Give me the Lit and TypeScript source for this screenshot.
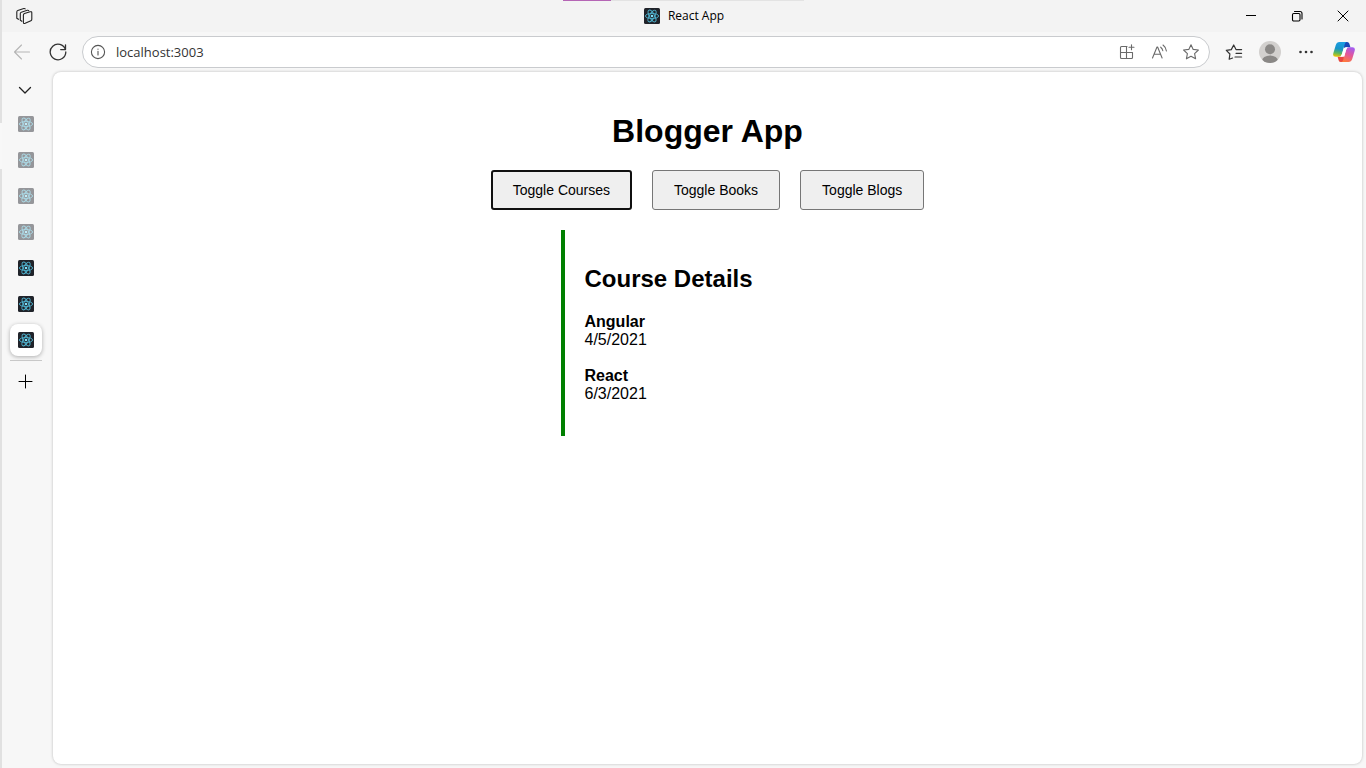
import { LitElement, html, svg, css, nothing } from "lit";
import { customElement, property, state } from "lit/decorators.js";
import { classMap } from "lit/directives/class-map.js";

const stroked = (size: number, body: unknown) => html`
  <svg width=${size} height=${size} viewBox="0 0 ${size} ${size}" fill="none" stroke="currentColor"
    stroke-width="1.1" stroke-linecap="round" stroke-linejoin="round" aria-hidden="true">${body}</svg>`;

const icons = {
  workspaces: stroked(18, svg`
    <path d="M8.400 8.100q0-1.100 1.100-1.500l5.600-1.800q1.700-.5 1.700 1v6.500q0 1-.9 1.400l-5.700 2.600q-1.800.7-1.800-1V8.100Z"/>
    <path d="M6.900 14.300 5.300 13.300V6.600q0-1.100 1-1.400l6-1.900q.9-.3 1.400.300"/>
    <path d="M3.500 12.300 1.800 11.200V4.900q0-1.100 1-1.400l6-1.900q.9-.3 1.400.300"/>`),
  back: stroked(18, svg`<path d="M16.500 9H1.500M8.500 2 1.500 9l7 7"/>`),
  refresh: stroked(18, svg`<path d="M16.400 6.500A7.800 7.800 0 1 0 16.800 9M16.500 1.800v4.800h-4.800" stroke-width="1.300"/>`),
  info: stroked(16, svg`<circle cx="8" cy="8" r="6.600"/><path d="M8 7.300v3.700M8 5v.200"/>`),
  apps: stroked(16, svg`<path d="M8 2.500H2.500q-1 0-1 1V13.500q0 1 1 1h10q1 0 1-1V8.500H1.500M7.500 2.500v12M12.500.800v5M10 3.300h5"/>`),
  read: stroked(18, svg`<path d="M2.500 15 7 4h.6l4.500 11M4 11.200h6.600M10.700 4.200q1.800 1.400 2.100 3.600M13 2q3 2.200 3.400 6"/>`),
  star: stroked(18, svg`<path d="m9 1.700 2.200 4.700 5.200.6-3.800 3.600 1 5.200L9 13.200l-4.600 2.600 1-5.200L1.600 7l5.200-.6L9 1.700Z"/>`),
  favorites: stroked(18, svg`<path d="M7.600 15 4.200 16.200l.7-5.200L1.300 7.300l5-.7L8.700 2l2.300 4.600h5.600M11 10.300h5.600M10 14h6.600" stroke-width="1.200"/>`),
  down: stroked(14, svg`<path d="m1.500 4.500 5.500 5.500 5.500-5.500" stroke-width="1.300"/>`),
  plus: stroked(15, svg`<path d="M7.500 1v13M1 7.500h13" stroke-width="1"/>`),
  minimize: stroked(10, svg`<path d="M0 4.500h10" stroke="#000" stroke-linecap="butt" stroke-width="1"/>`),
  restore: stroked(12, svg`<rect x="1.500" y="3.500" width="7.500" height="7.500" rx="1.200"/><path d="M3.500 1.500H9q2 0 2 2V9"/>`),
  close: stroked(12, svg`<path d="m1 1 10 10M11 1 1 11" stroke-width="1"/>`),
  more: html`<svg width="16" height="16" viewBox="0 0 16 16" fill="currentColor" aria-hidden="true">
    <circle cx="2.500" cy="8" r="1.300"/><circle cx="8" cy="8" r="1.300"/><circle cx="13.500" cy="8" r="1.300"/></svg>`,
  profile: html`<svg width="22" height="22" viewBox="0 0 22 22" aria-hidden="true">
    <defs><clipPath id="disc"><circle cx="11" cy="11" r="11"/></clipPath></defs>
    <circle cx="11" cy="11" r="11" fill="#d2d0ce"/>
    <g fill="#8a8886" clip-path="url(#disc)"><circle cx="11" cy="8.300" r="5"/><ellipse cx="11" cy="20" rx="8" ry="5.600"/></g></svg>`,
  copilot: html`<svg width="22" height="22" viewBox="0 0 22 22" aria-hidden="true">
    <defs>
      <linearGradient id="cool" x1="0.400" y1="0" x2="0.250" y2="1">
        <stop offset="0" stop-color="#1b9de2"/><stop offset=".45" stop-color="#1794c8"/>
        <stop offset=".75" stop-color="#5db85a"/><stop offset="1" stop-color="#f0c400"/></linearGradient>
      <linearGradient id="warm" x1="0.700" y1="0" x2="0.300" y2="1">
        <stop offset="0" stop-color="#a35df0"/><stop offset=".45" stop-color="#e0569f"/>
        <stop offset="1" stop-color="#ff7a3c"/></linearGradient>
    </defs>
    <path d="M11 1h3.200q1.600 0 2.100 1.600l1.100 3.700h-3.800q-1.900 0-2.500 1.900z" fill="#1748b8"/>
    <path d="M11 21H7.800q-1.600 0-2.100-1.600l-1.100-3.700h3.800q1.900 0 2.500-1.900z" fill="#e8483f"/>
    <path d="M6.500 1h7q-1.300.6-1.800 2.300L8.800 13.300q-.7 2.400-2.900 2.400H2.600q-3.200 0-2.300-3.400L2.800 4Q3.700 1 6.500 1Z" fill="url(#cool)"/>
    <path d="M15.500 21h-7q1.300-.6 1.800-2.300l2.900-10q.7-2.400 2.900-2.400h3.300q3.200 0 2.300 3.400L19.200 18q-.9 3-3.700 3Z" fill="url(#warm)"/>
    <path d="M10.900 7.200q.6-.9 2.700-.9h1.200q-1.200.6-1.700 2.400l-1.900 6.500q-.4.600-2.100.5H7.400q1-.5 1.500-2.400Z" fill="#fff"/></svg>`,
  react: html`<svg width="16" height="16" viewBox="0 0 16 16" fill="none" aria-hidden="true">
    <rect width="16" height="16" rx="1.500" fill="#20232a"/>
    <g stroke="#4fb3cf" stroke-width=".9">
      <ellipse cx="8" cy="8" rx="6.600" ry="2.600"/>
      <ellipse cx="8" cy="8" rx="6.600" ry="2.600" transform="rotate(60 8 8)"/>
      <ellipse cx="8" cy="8" rx="6.600" ry="2.600" transform="rotate(120 8 8)"/></g>
    <circle cx="8" cy="8" r="1.300" fill="#7fe0fa"/></svg>`,
};

interface Tab { id: number; asleep: boolean; }

@customElement("browser-titlebar")
class BrowserTitlebar extends LitElement {
  @property() heading = "";

  static styles = css`
    :host { display: grid; grid-template-columns: 1fr auto 1fr; align-items: center; height: 32px; background: #f3f3f3; color: #000; }
    button { display: grid; place-items: center; height: 32px; padding: 0; border: 0; background: none; color: inherit; }
    .workspaces { width: 44px; color: #222; }
    .title { display: flex; align-items: center; gap: 8px; font: 12px/18px "Open Sans", "Noto Sans", sans-serif; }
    .title svg { display: block; }
    .controls { display: flex; justify-content: flex-end; }
    .controls button { width: 46px; }
  `;

  render() {
    return html`
      <button class="workspaces" aria-label="Workspaces">${icons.workspaces}</button>
      <div class="title">${icons.react}<span>${this.heading}</span></div>
      <div class="controls">
        <button aria-label="Minimize">${icons.minimize}</button>
        <button aria-label="Restore">${icons.restore}</button>
        <button aria-label="Close">${icons.close}</button>
      </div>`;
  }
}

@customElement("browser-toolbar")
class BrowserToolbar extends LitElement {
  @property() url = "";

  static styles = css`
    :host { display: flex; align-items: center; height: 40px; padding: 0 4px 0 2px; background: #f7f7f7; }
    button { display: grid; place-items: center; flex: none; width: 36px; height: 32px; padding: 0; border: 0; background: none; color: #333; }
    .back { color: #b5b5b5; }
    .address { display: flex; flex: 1; align-items: center; box-sizing: border-box; height: 32px; margin: 0 6px; padding-right: 2px; border: 1px solid #c9cbce; border-radius: 16px; background: #fff; }
    .address button { width: 32px; height: 30px; color: #6a6a6a; }
    .address .site { width: 30px; color: #555; }
    input { flex: 1; min-width: 0; padding: 0 3px; border: 0; outline: 0; background: none; color: #333; font: 13px/20px "Open Sans", "Noto Sans", sans-serif; }
    .copilot { margin-left: 2px; }
  `;

  render() {
    return html`
      <button class="back" aria-label="Back">${icons.back}</button>
      <button aria-label="Refresh">${icons.refresh}</button>
      <div class="address">
        <button class="site" aria-label="View site information">${icons.info}</button>
        <input type="text" aria-label="Address and search bar" .value=${this.url} />
        <button aria-label="App available">${icons.apps}</button>
        <button aria-label="Read aloud">${icons.read}</button>
        <button aria-label="Add to favorites">${icons.star}</button>
      </div>
      <button aria-label="Favorites">${icons.favorites}</button>
      <button aria-label="Profile">${icons.profile}</button>
      <button aria-label="Settings and more">${icons.more}</button>
      <button class="copilot" aria-label="Copilot">${icons.copilot}</button>`;
  }
}

@customElement("browser-tabs")
class BrowserTabs extends LitElement {
  @property({ attribute: false }) tabs: Tab[] = [];
  @property({ type: Number }) active = 0;

  static styles = css`
    :host { display: flex; flex-direction: column; box-sizing: border-box; width: 51px; padding: 2px 8px; background: #f7f7f7; }
    button { display: grid; place-items: center; width: 32px; height: 32px; padding: 0; border: 0; border-radius: 8px; background: none; color: #222; }
    .list { display: flex; flex-direction: column; gap: 4px; margin: 2px 0 4px; }
    .toggle { width: 30px; }
    .asleep svg { opacity: .45; }
    .active { background: #fff; box-shadow: 0 1px 4px #0000004d; }
    .add { margin-top: 4px; color: #000; width: 31px; }
    hr { width: 32px; margin: 0; border: 0; border-top: 1px solid #c8c8c8; }
  `;

  render() {
    return html`
      <button class="toggle" aria-label="Expand tabs">${icons.down}</button>
      <div class="list">
        ${this.tabs.map((tab) => html`
          <button class=${classMap({ asleep: tab.asleep, active: tab.id === this.active })} aria-label="React App">${icons.react}</button>`)}
      </div>
      <hr />
      <button class="add" aria-label="New tab">${icons.plus}</button>`;
  }
}

@customElement("blogger-app")
class BloggerApp extends LitElement {
  @state() private shown = "Courses";

  private sections = ["Courses", "Books", "Blogs"];
  private courses = [
    { name: "Angular", date: "4/5/2021" },
    { name: "React", date: "6/3/2021" },
  ];

  static styles = css`
    :host { display: flex; flex-direction: column; align-items: center; padding: 40px 20px; color: #000; font: 16px/18px "Liberation Sans", Arial, sans-serif; }
    h1 { margin: 0 0 20px; font-size: 32px; line-height: 38px; }
    .toggles { display: flex; gap: 20px; }
    .toggles button { height: 40px; padding: 0 21px; border: 1px solid #767676; border-radius: 3px; background: #efefef; color: #000; font: 14px/16px "Liberation Sans", Arial, sans-serif; }
    .toggles .current { padding: 0 20px; border: 2px solid #101010; }
    .details { box-sizing: border-box; width: 100%; max-width: 294px; margin-top: 20px; padding: 35px 20px 15px; border-left: 4px solid green; }
    h2 { margin: 0 0 20px; font-size: 24px; line-height: 28px; }
    h3 { margin: 0; font-size: 16px; line-height: 18px; }
    p { margin: 0 0 18px; }
  `;

  render() {
    return html`
      <h1>Blogger App</h1>
      <div class="toggles">
        ${this.sections.map((name) => html`
          <button class=${classMap({ current: name === this.shown })}
            @click=${() => { this.shown = name; }}>Toggle ${name}</button>`)}
      </div>
      ${this.shown === "Courses" ? html`
        <section class="details">
          <h2>Course Details</h2>
          ${this.courses.map((course) => html`<h3>${course.name}</h3><p>${course.date}</p>`)}
        </section>` : nothing}`;
  }
}

@customElement("app-root")
class AppRoot extends LitElement {
  private tabs: Tab[] = [0, 1, 2, 3, 4, 5, 6].map((id) => ({ id, asleep: id < 4 }));

  static styles = css`
    :host { display: grid; grid-template-columns: 2px 1fr; height: 100vh; background: #f7f7f7; }
    .edge { background: linear-gradient(#e1e1e1 16%, #f8f8f8 16% 22%, #e1e1e1 22%); }
    .window { display: flex; flex-direction: column; position: relative; min-width: 0; }
    .progress { position: absolute; top: 0; left: 50%; width: 241px; height: 1px; margin-left: -121px; background: linear-gradient(90deg, #b565b5 20%, #e3e3e3 20%); }
    .body { display: flex; flex: 1; min-height: 0; padding: 0 4px 4px 0; }
    .page { flex: 1; overflow: auto; border-radius: 8px; background: #fff; box-shadow: 0 0 3px #00000040; }
  `;

  render() {
    return html`
      <div class="edge"></div>
      <div class="window">
        <browser-titlebar heading="React App"></browser-titlebar>
        <browser-toolbar url="localhost:3003"></browser-toolbar>
        <div class="body">
          <browser-tabs .tabs=${this.tabs} active="6"></browser-tabs>
          <main class="page"><blogger-app></blogger-app></main>
        </div>
        <div class="progress"></div>
      </div>`;
  }
}
